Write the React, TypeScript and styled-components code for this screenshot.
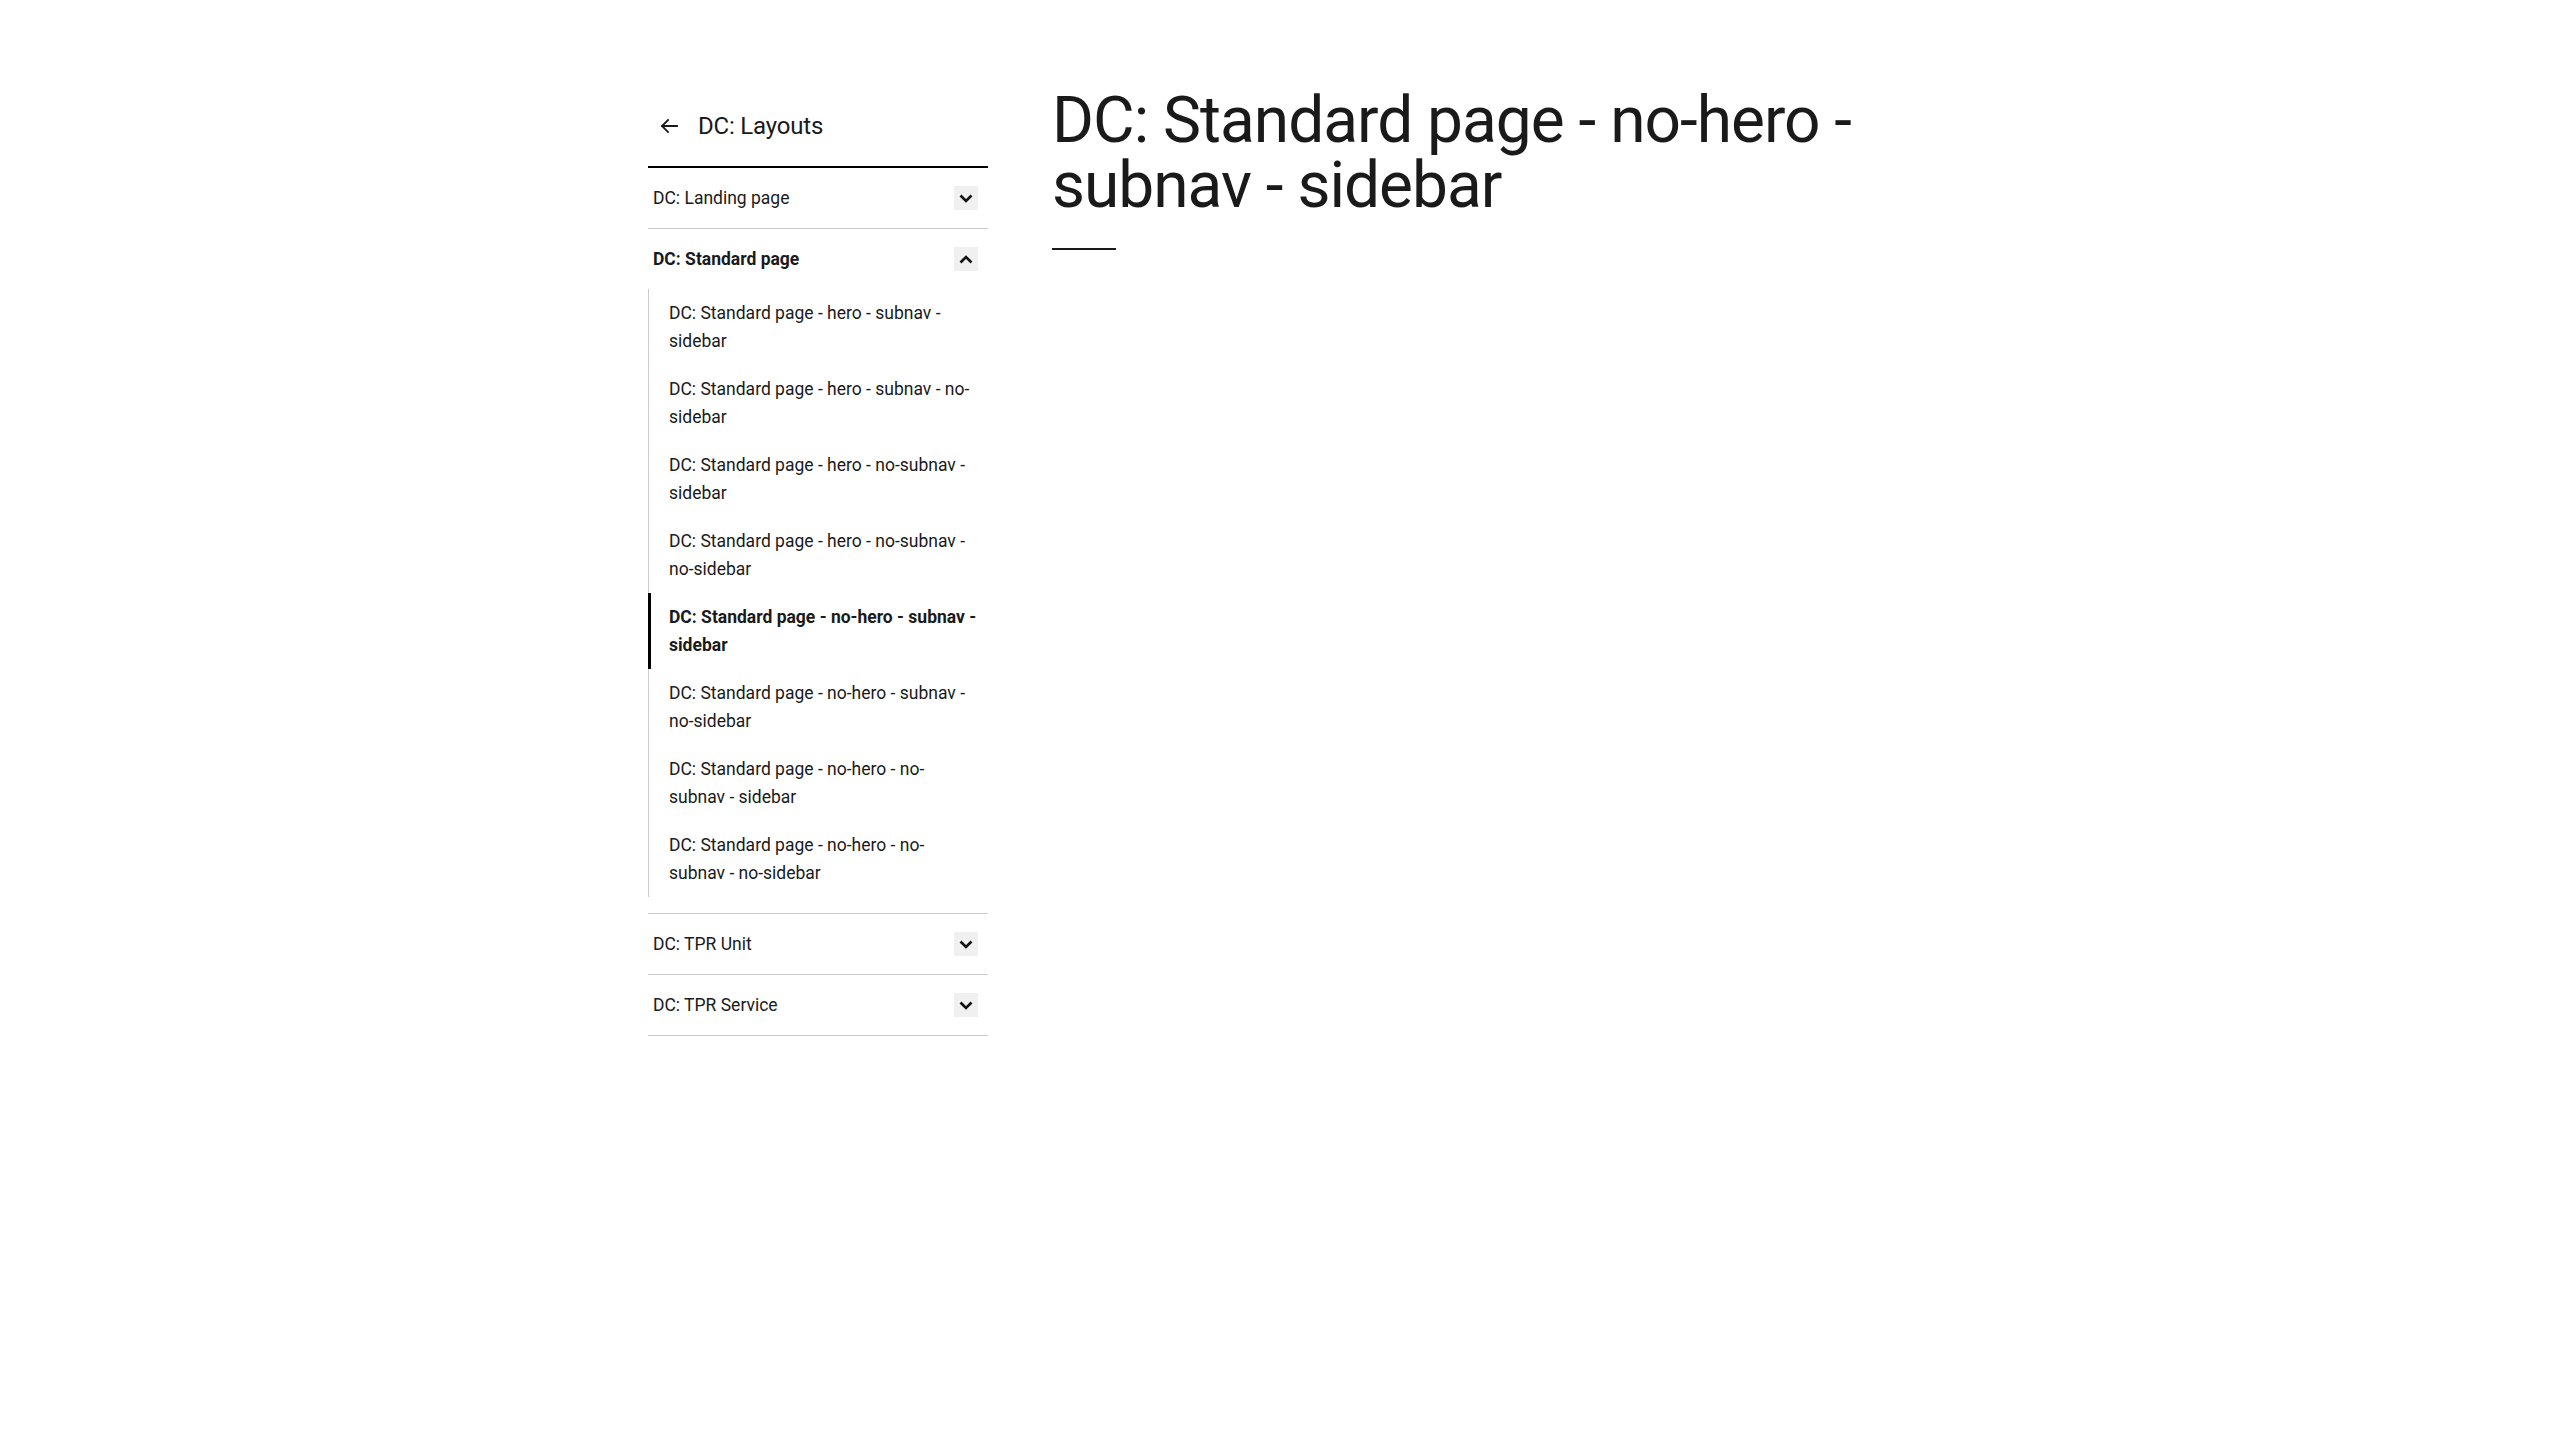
import React from "react";
import styled, { createGlobalStyle } from "styled-components";

const SECTIONS = [
  { title: "DC: Landing page", open: false, items: [] as string[] },
  {
    title: "DC: Standard page",
    open: true,
    items: [
      "DC: Standard page - hero - subnav - sidebar",
      "DC: Standard page - hero - subnav - no-sidebar",
      "DC: Standard page - hero - no-subnav - sidebar",
      "DC: Standard page - hero - no-subnav - no-sidebar",
      "DC: Standard page - no-hero - subnav - sidebar",
      "DC: Standard page - no-hero - subnav - no-sidebar",
      "DC: Standard page - no-hero - no-subnav - sidebar",
      "DC: Standard page - no-hero - no-subnav - no-sidebar",
    ],
  },
  { title: "DC: TPR Unit", open: false, items: [] as string[] },
  { title: "DC: TPR Service", open: false, items: [] as string[] },
];

const ACTIVE = "DC: Standard page - no-hero - subnav - sidebar";

const GlobalStyle = createGlobalStyle`
  html, body {
    margin: 0;
    padding: 0;
    background: #ffffff;
    color: #1a1a1a;
    font-family: Roboto, "Liberation Sans", sans-serif;
  }
  * {
    box-sizing: border-box;
  }
`;

function ArrowLeft() {
  return (
    <svg width="18" height="16" viewBox="0 0 18 16" fill="none">
      <path
        d="M17 8H2M8 2L2 8l6 6"
        stroke="#1a1a1a"
        strokeWidth="1.8"
        strokeLinecap="square"
      />
    </svg>
  );
}

function Chevron({ up }: { up?: boolean }) {
  return (
    <svg width="14" height="9" viewBox="0 0 14 9" fill="none">
      <path
        d={up ? "M1.5 7.5L7 2l5.5 5.5" : "M1.5 1.5L7 7l5.5-5.5"}
        stroke="#111"
        strokeWidth="2.6"
      />
    </svg>
  );
}

export default function App() {
  return (
    <>
      <GlobalStyle />
      <Page>
        <Sidebar>
          <BackLink>
            <ArrowLeft />
            <BackTitle>DC: Layouts</BackTitle>
          </BackLink>
          {SECTIONS.map((section) => (
            <Section key={section.title}>
              <SectionHeader>
                <SectionTitle $open={section.open}>{section.title}</SectionTitle>
                <ToggleButton>
                  <Chevron up={section.open} />
                </ToggleButton>
              </SectionHeader>
              {section.open && (
                <SubList>
                  {section.items.map((item) => (
                    <SubItem key={item} $active={item === ACTIVE}>
                      {item}
                    </SubItem>
                  ))}
                </SubList>
              )}
            </Section>
          ))}
        </Sidebar>
        <Main>
          <Heading>DC: Standard page - no-hero - subnav - sidebar</Heading>
          <HeadingRule />
        </Main>
      </Page>
    </>
  );
}

const Page = styled.div`
  display: grid;
  grid-template-columns: 340px 1fr;
  column-gap: 64px;
  max-width: 1264px;
  margin: 0 auto;
  padding-top: 88px;
`;

const Sidebar = styled.nav`
  display: flex;
  flex-direction: column;
`;

const BackLink = styled.a`
  display: flex;
  align-items: center;
  gap: 20px;
  height: 80px;
  padding: 0 0 2px 12px;
  border-bottom: 2px solid #000;
  color: #1a1a1a;
  cursor: pointer;
`;

const BackTitle = styled.span`
  font-size: 24px;
  line-height: 32px;
  font-weight: 400;
  letter-spacing: -0.2px;
`;

const Section = styled.div`
  border-bottom: 1px solid #cccccc;

  &:has(ul) {
    padding-bottom: 16px;
  }
`;

const SectionHeader = styled.div`
  display: flex;
  align-items: center;
  justify-content: space-between;
  height: 60px;
  padding: 0 10px 0 5px;
`;

const SectionTitle = styled.span<{ $open?: boolean }>`
  font-size: 17.5px;
  line-height: 24px;
  font-weight: ${(p) => (p.$open ? 700 : 400)};
`;

const ToggleButton = styled.button`
  display: flex;
  align-items: center;
  justify-content: center;
  width: 24px;
  height: 24px;
  padding: 0;
  border: none;
  background: #f0f0f0;
  cursor: pointer;
`;

const SubList = styled.ul`
  list-style: none;
  margin: 0;
  padding: 0;
  border-left: 1px solid #cccccc;
`;

const SubItem = styled.li<{ $active?: boolean }>`
  padding: 10px 10px 10px 20px;
  margin-left: ${(p) => (p.$active ? "-1px" : "0")};
  border-left: ${(p) => (p.$active ? "3px solid #000" : "none")};
  padding-left: ${(p) => (p.$active ? "18px" : "20px")};
  font-size: 17.5px;
  line-height: 28px;
  font-weight: ${(p) => (p.$active ? 700 : 400)};
  color: #1a1a1a;
`;

const Main = styled.main`
  display: flex;
  flex-direction: column;
`;

const Heading = styled.h1`
  margin: 0;
  font-size: 64px;
  line-height: 65px;
  font-weight: 400;
  letter-spacing: -1px;
  color: #1a1a1a;
`;

const HeadingRule = styled.div`
  width: 64px;
  height: 2px;
  margin-top: 30px;
  background: #1a1a1a;
`;
